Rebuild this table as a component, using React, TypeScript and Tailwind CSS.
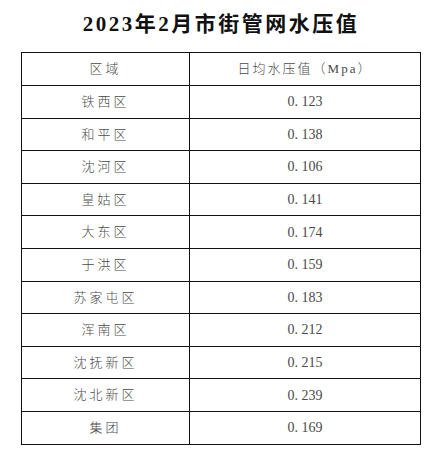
import React from "react";

const rows: [string, string][] = [
  ["铁西区", "0.123"],
  ["和平区", "0.138"],
  ["沈河区", "0.106"],
  ["皇姑区", "0.141"],
  ["大东区", "0.174"],
  ["于洪区", "0.159"],
  ["苏家屯区", "0.183"],
  ["浑南区", "0.212"],
  ["沈抚新区", "0.215"],
  ["沈北新区", "0.239"],
  ["集团", "0.169"],
];

const fmt = (v: string) => v.replace(".", ". ");

export default function App() {
  return (
    <div
      className="w-[442px] h-[466px] bg-white pt-[9px]"
      style={{ fontFamily: '"Liberation Serif", "Noto Sans CJK SC", serif' }}
    >
      <h1 className="text-center text-[21px] font-bold leading-[30px] tracking-[2.5px] text-[#111]">
        2023年2月市街管网水压值
      </h1>
      <div className="px-[21px] pt-[13px]">
        <table className="w-full border-collapse text-[13px] font-light text-[#4a4a4a]">
          <tbody>
            <tr className="h-[33px]">
              <td className="w-[168px] border-[1.5px] border-[#111] text-center tracking-[3px]">
                区域
              </td>
              <td className="border-[1.5px] border-[#111] text-center tracking-[2px]">
                日均水压值（Mpa）
              </td>
            </tr>
            {rows.map(([area, val]) => (
              <tr key={area} className="h-[32.6px]">
                <td className="border-[1.5px] border-[#111] text-center tracking-[3px]">
                  {area}
                </td>
                <td className="border-[1.5px] border-[#111] text-center text-[14px] font-normal">
                  {fmt(val)}
                </td>
              </tr>
            ))}
          </tbody>
        </table>
      </div>
    </div>
  );
}
